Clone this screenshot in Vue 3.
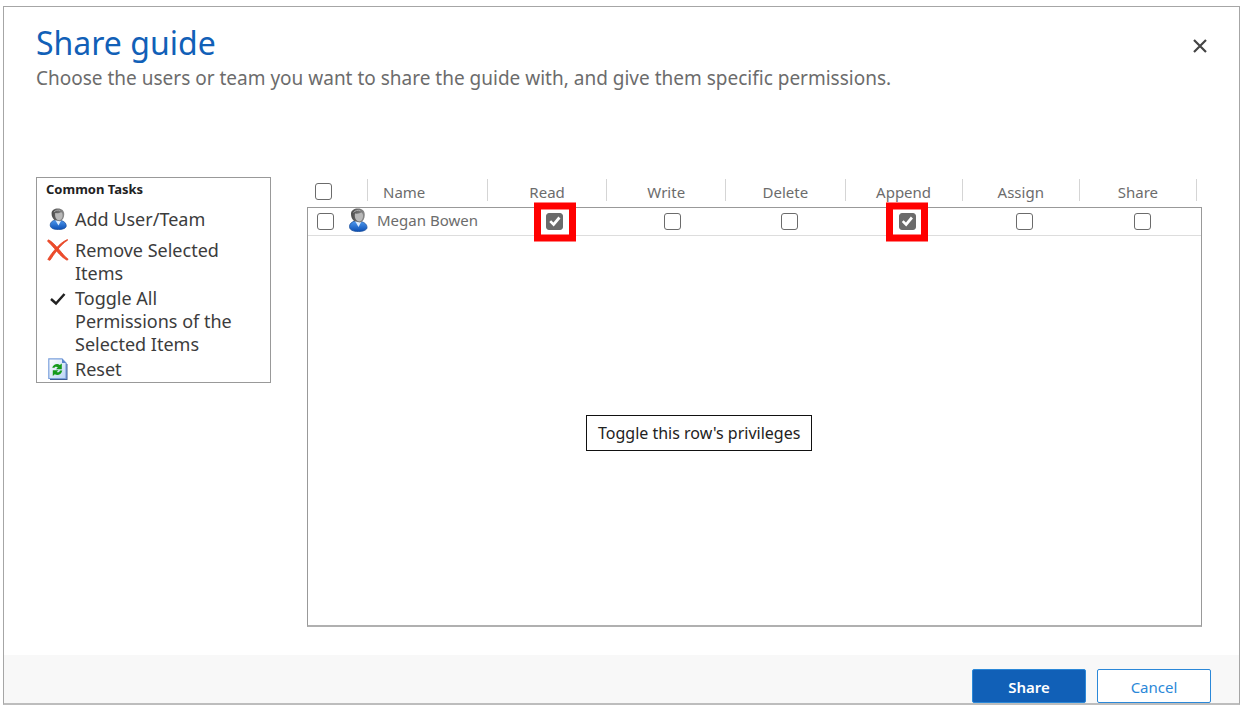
<script setup>
import { ref, reactive } from 'vue'

const permissions = ['Read', 'Write', 'Delete', 'Append', 'Assign', 'Share']
const tasks = [
  { icon: 'user', label: 'Add User/Team' },
  { icon: 'remove', label: 'Remove Selected Items' },
  { icon: 'check', label: 'Toggle All Permissions of the Selected Items' },
  { icon: 'reset', label: 'Reset' }
]
const allSelected = ref(false)
const members = reactive([
  {
    name: 'Megan Bowen',
    selected: false,
    granted: { Read: true, Write: false, Delete: false, Append: true, Assign: false, Share: false }
  }
])
const highlighted = ['Read', 'Append']
</script>

<template>
  <main class="dialog">
    <header class="head">
      <div>
        <h1>Share guide</h1>
        <p>Choose the users or team you want to share the guide with, and give them specific permissions.</p>
      </div>
      <button class="close" type="button" aria-label="Close">
        <svg viewBox="0 0 14 14" width="14" height="14"><path d="M1 1L13 13M13 1L1 13" fill="none" stroke="#444" stroke-width="2.2" /></svg>
      </button>
    </header>

    <svg class="defs" width="0" height="0" aria-hidden="true">
      <defs>
        <linearGradient id="coat" x1="0" y1="0" x2="0" y2="1">
          <stop offset="0" stop-color="#4f9af0" /><stop offset="1" stop-color="#0c4fb4" />
        </linearGradient>
        <linearGradient id="hair" x1="0" y1="0" x2="1" y2="0">
          <stop offset="0" stop-color="#4c4c4c" /><stop offset="1" stop-color="#8c8c8c" />
        </linearGradient>
        <linearGradient id="sheet" x1="0" y1="0" x2="1" y2="1">
          <stop offset="0" stop-color="#ffffff" /><stop offset="1" stop-color="#b9d3f5" />
        </linearGradient>
        <symbol id="user" viewBox="0 0 20 24">
          <path d="M1.500 18.500C1.500 15.500 4 13.800 7 13L13 13.500C16.800 14.500 19 16.500 19 19.500C19 22 15 23.500 10.500 23.500C5 23.500 1.500 22 1.500 18.500Z" fill="url(#coat)" stroke="#1b4f9c" stroke-width="0.8" />
          <path d="M7 13L10.500 19L13.500 13.500Z" fill="#dcecff" />
          <path d="M3 6C3 2.500 6 0.600 10 0.600C14.200 0.600 17 3 16.800 7C16.700 10.500 15.300 13.500 12 14.500L6 13C4 11 3 9 3 6Z" fill="url(#hair)" />
          <path d="M7 5.500C10 6 12 5 13.800 4.500C15.500 6 15.500 9.500 14 11.800C12.500 14 10 13.800 8.300 12C7 10.500 6.500 8 7 5.500Z" fill="#b9b9b9" />
          <path d="M5.500 4.500C7 2.500 10 1.800 12.500 2.800" fill="none" stroke="#aaa" stroke-width="1" />
        </symbol>
        <symbol id="remove" viewBox="0 0 22 22">
          <path d="M1.500 0.800C5 2.500 9 7 12 10.500C15 14 18 18 21.200 20.300L20 21.200C16 19 13 16 10 12.500C7 9 4 5 0.500 2.200Z" fill="#ef4c2c" stroke="#e2401f" stroke-width="0.8" />
          <path d="M20.800 1C16 4 12.500 8 9.500 12C7 15 5 18.500 3 21.300L0.800 20.500C3 16.500 6 12.800 9 9.500C12.500 5.500 16 2.500 20.300 0.600Z" fill="#ef4c2c" stroke="#e2401f" stroke-width="0.8" />
        </symbol>
        <symbol id="check" viewBox="0 0 22 22">
          <path d="M4 12L9 16.500L17.500 7" fill="none" stroke="#222" stroke-width="2.500" />
        </symbol>
        <symbol id="reset" viewBox="0 0 20 22">
          <path d="M2 2H15L19.500 6.500V22H2Z" fill="#3e5c93" />
          <path d="M0.800 0.800H14L18 5V20.500H0.800Z" fill="url(#sheet)" stroke="#7ba0dc" stroke-width="1.200" />
          <path d="M14 0.800V5H18Z" fill="#5986cc" />
          <path d="M4.200 9.800C5.200 6.200 9.500 5 11.800 7L13.800 5.500V11.200H8L9.900 9.300C8.300 8.200 6.800 8.600 6.500 9.800Z" fill="#159a1c" />
          <path d="M14.300 12.500C13.300 16.800 9.500 18 6.800 16.300L4.800 18V12.200H10.500L8.700 13.900C10.300 14.800 11.700 14 12 12.500Z" fill="#159a1c" />
        </symbol>
      </defs>
    </svg>

    <div class="content">
      <nav class="tasks">
        <h2>Common Tasks</h2>
        <ul>
          <li v-for="t in tasks" :key="t.icon">
            <button type="button" :class="t.icon">
              <svg class="glyph"><use :href="'#' + t.icon" /></svg>
              <span>{{ t.label }}</span>
            </button>
          </li>
        </ul>
      </nav>

      <div class="grid">
        <table>
          <thead>
            <tr>
              <th class="pick"><input v-model="allSelected" type="checkbox" aria-label="Select all" /></th>
              <th class="name">Name</th>
              <th v-for="p in permissions" :key="p">{{ p }}</th>
            </tr>
          </thead>
          <tbody>
            <tr v-for="m in members" :key="m.name">
              <td class="pick"><input v-model="m.selected" type="checkbox" :aria-label="'Select ' + m.name" /></td>
              <td class="name"><svg class="avatar"><use href="#user" /></svg><span>{{ m.name }}</span></td>
              <td v-for="p in permissions" :key="p">
                <input v-model="m.granted[p]" type="checkbox" :aria-label="p" />
                <i v-if="highlighted.includes(p)" class="mark"></i>
              </td>
            </tr>
          </tbody>
        </table>
        <div class="tip" role="tooltip">Toggle this row's privileges</div>
      </div>
    </div>

    <footer class="foot">
      <button class="primary" type="button">Share</button>
      <button type="button">Cancel</button>
    </footer>
  </main>
</template>

<style>
body {
  background: #fff;
}
</style>

<style scoped>
.dialog {
  box-sizing: border-box;
  min-height: calc(100vh - 10px);
  margin: 6px 4px 4px 3px;
  display: flex;
  flex-direction: column;
  border: 1px solid #a6a6a6;
  border-bottom: 2px solid #bdbdbd;
  font-family: "Noto Sans", "Open Sans", sans-serif;
  color: #333;
}
.dialog * {
  box-sizing: border-box;
}
button {
  font-family: inherit;
  cursor: pointer;
}
.defs {
  position: absolute;
}
.head {
  display: flex;
  justify-content: space-between;
  align-items: flex-start;
  padding: 14px 32px 0 32px;
}
h1 {
  margin: 0;
  font-size: 32px;
  line-height: 44px;
  font-weight: 400;
  color: #1160b7;
}
p {
  margin: 0;
  font-size: 19px;
  line-height: 26px;
  color: #6c6c6c;
}
.close {
  margin-top: 18px;
  padding: 0;
  border: 0;
  background: none;
  line-height: 0;
}
.content {
  flex: 1;
  display: flex;
  align-items: flex-start;
  gap: 36px;
  padding: 86px 37px 28px 32px;
}
.tasks {
  flex: none;
  width: 235px;
  border: 1px solid #999;
  padding-bottom: 1px;
}
h2 {
  margin: 0 0 7px;
  padding-left: 9px;
  font-size: 13px;
  line-height: 23px;
  font-weight: 700;
  color: #222;
}
ul {
  margin: 0;
  padding: 0;
  list-style: none;
}
.tasks button {
  display: flex;
  align-items: flex-start;
  gap: 6px;
  width: 100%;
  margin-bottom: 2px;
  padding: 0 24px 0 10px;
  border: 0;
  background: none;
  font-size: 18px;
  line-height: 23px;
  text-align: left;
  color: #3c3c3c;
}
.tasks button.user {
  margin-bottom: 8px;
}
.tasks li:last-child button {
  margin-bottom: 0;
}
.glyph {
  flex: none;
  width: 22px;
  height: 22px;
}
.grid {
  position: relative;
  align-self: stretch;
  flex: 1;
  display: flex;
}
table {
  flex: 1;
  display: flex;
  flex-direction: column;
  font-size: 15px;
  color: #6c6c6c;
}
thead,
tbody {
  display: block;
}
thead tr {
  display: grid;
  grid-template-columns: 61px 120px repeat(3, 119fr) repeat(3, 117fr);
  height: 30px;
  padding: 2px 5px 0 0;
}
th {
  height: 22px;
  padding: 1px 0 0;
  border-right: 1px solid #d5d5d5;
  font-weight: 400;
  line-height: 24px;
  white-space: nowrap;
}
th.name {
  padding-left: 15px;
  text-align: left;
}
th.pick {
  padding: 4px 0 0 8px;
  text-align: left;
  line-height: 0;
}
tbody {
  flex: 1;
  border: 1px solid #999;
  border-bottom: 2px solid #b0b0b0;
}
tbody tr {
  display: grid;
  grid-template-columns: 40px 148px repeat(6, 1fr);
  height: 28px;
  border-bottom: 1px solid #ddd;
}
td {
  position: relative;
  display: flex;
  align-items: center;
  justify-content: center;
  padding: 0;
}
td.pick {
  justify-content: flex-start;
  padding-left: 9px;
}
td.name {
  justify-content: flex-start;
  align-items: flex-start;
  gap: 9px;
  line-height: 24px;
}
.avatar {
  width: 20px;
  height: 24px;
}
input {
  appearance: none;
  position: relative;
  flex: none;
  width: 17px;
  height: 17px;
  margin: 0;
  border: 1px solid #6b6b6b;
  border-radius: 3px;
  background: #fff;
}
input:checked {
  background: #6b6b6b;
}
input:checked::after {
  content: "";
  position: absolute;
  inset: 1px;
  background: #fff;
  clip-path: polygon(8% 54%, 22% 40%, 40% 58%, 78% 12%, 94% 26%, 42% 88%);
}
.mark {
  position: absolute;
  top: 50%;
  left: 50%;
  width: 42px;
  height: 39px;
  transform: translate(-50%, -50%);
  border: 7px solid #f00;
  pointer-events: none;
}
.tip {
  position: absolute;
  top: 238px;
  left: 279px;
  padding: 5px 11px;
  border: 1px solid #111;
  background: #fff;
  font-size: 16px;
  line-height: 24px;
  color: #222;
  white-space: nowrap;
}
.foot {
  display: flex;
  justify-content: flex-end;
  gap: 11px;
  padding: 14px 28px 0;
  background: #f8f8f8;
}
.foot button {
  width: 114px;
  height: 34px;
  padding: 2px 0 0;
  border: 1px solid #2b88d8;
  border-radius: 2px;
  background: #fff;
  font-size: 15px;
  color: #2b88d8;
}
.foot .primary {
  background: #1160b7;
  color: #fff;
  font-weight: 600;
}
</style>
